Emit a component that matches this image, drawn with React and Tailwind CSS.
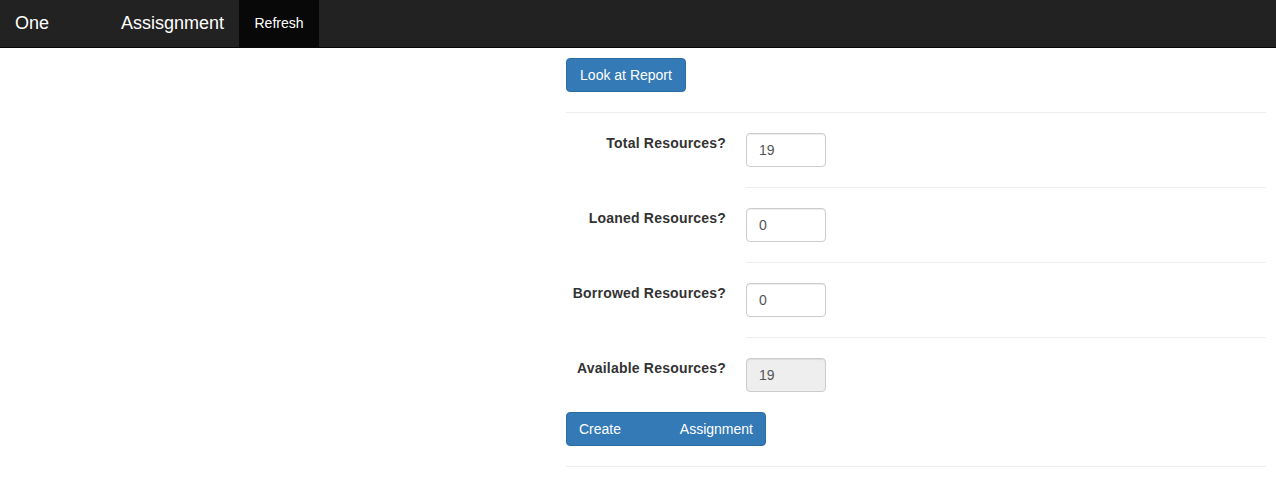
const rows = [
  { label: 'Total Resources?', value: '19' },
  { label: 'Loaned Resources?', value: '0' },
  { label: 'Borrowed Resources?', value: '0' },
];

const Field = ({ value, disabled }) => (
  <input
    type="text"
    defaultValue={value}
    disabled={disabled}
    className={
      'block w-[80px] h-[34px] px-[12px] py-[6px] text-[14px] text-[#555] border border-[#ccc] rounded-[4px] shadow-[inset_0_1px_1px_rgba(0,0,0,0.075)] outline-none ' +
      (disabled ? 'bg-[#eee]' : 'bg-white')
    }
  />
);

const Label = ({ children }) => (
  <label className="w-[160px] shrink-0 text-right font-bold text-[14px] leading-[20px] text-[#333] tracking-[0.2px]">
    {children}
  </label>
);

export default function App() {
  return (
    <div className="min-h-[492px] bg-white font-['Liberation_Sans',Arial,sans-serif] text-[14px] text-[#333]">
      <nav className="h-[48px] bg-[#222] border-b border-[#080808] flex items-stretch">
        <span className="pl-[15px] w-[121px] text-[18px] text-white flex items-center">One</span>
        <span className="w-[118px] text-[18px] text-white flex items-center">Assisgnment</span>
        <button className="w-[80px] bg-[#080808] text-white text-[14px] flex items-center justify-center">
          Refresh
        </button>
      </nav>

      <div className="flex">
        <div className="w-[566px] shrink-0" />
        <div className="flex-1 pr-[10px]">
          <button className="mt-[10px] w-[120px] h-[34px] px-[12px] bg-[#337ab7] border border-[#2e6da4] rounded-[4px] text-white text-[14px]">
            Look at Report
          </button>
          <hr className="my-[20px] border-0 border-t border-[#eee]" />

          {rows.map((r) => (
            <div key={r.label} className="flex gap-[20px]">
              <Label>{r.label}</Label>
              <div className="flex-1">
                <Field value={r.value} />
                <hr className="my-[20px] border-0 border-t border-[#eee]" />
              </div>
            </div>
          ))}

          <div className="flex gap-[20px]">
            <Label>Available Resources?</Label>
            <Field value="19" disabled />
          </div>

          <button className="mt-[20px] w-[200px] h-[34px] px-[12px] bg-[#337ab7] border border-[#2e6da4] rounded-[4px] text-white text-[14px] flex items-center justify-between">
            <span>Create</span>
            <span>Assignment</span>
          </button>
          <hr className="mt-[20px] border-0 border-t border-[#eee]" />
        </div>
      </div>
    </div>
  );
}
